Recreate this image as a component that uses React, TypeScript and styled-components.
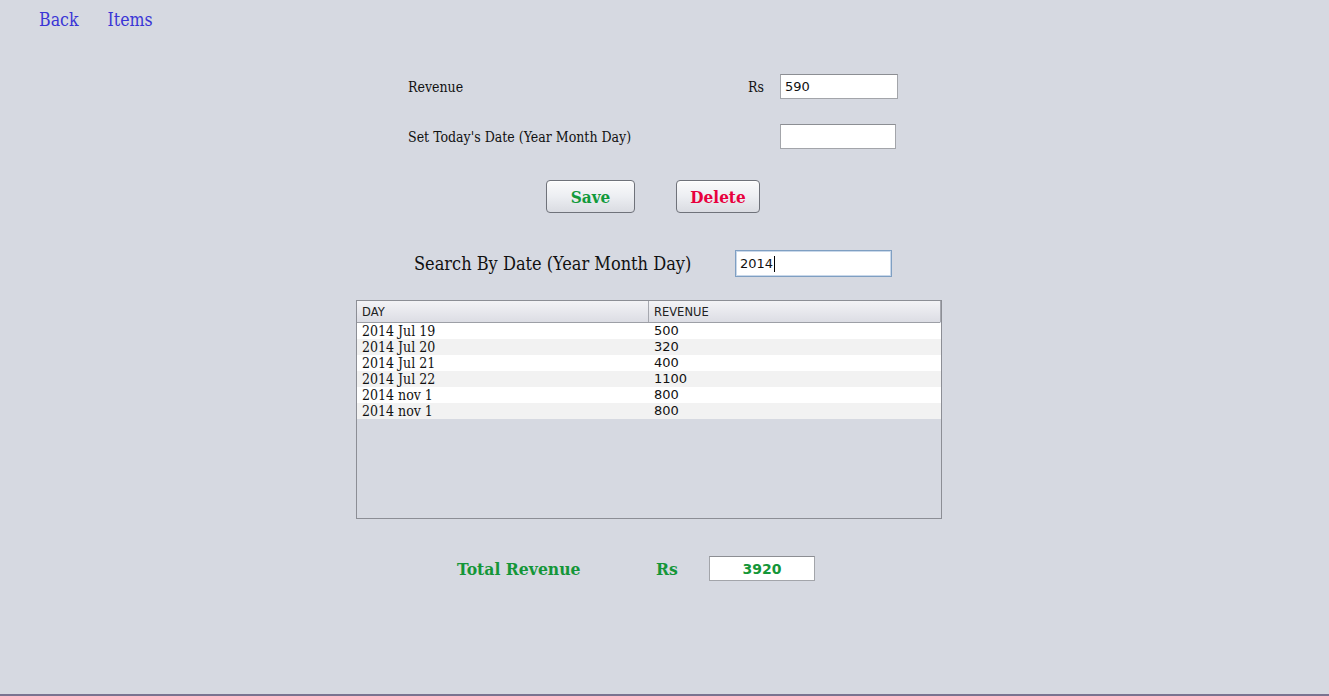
import React from "react";
import styled, { createGlobalStyle } from "styled-components";

const GlobalStyle = createGlobalStyle`
  html, body { margin: 0; padding: 0; background: #d6d9e1; }
  * { box-sizing: border-box; }
`;

const SLAB = `"DejaVu Serif Condensed", "Liberation Serif", serif`;
const SANS = `"DejaVu Sans", "Liberation Sans", sans-serif`;

const Page = styled.div`
  width: 1329px;
  height: 696px;
  background: #d6d9e1;
  border-bottom: 2px solid #7a7390;
  font-family: ${SLAB};
  color: #111;
  overflow: hidden;
`;

const Nav = styled.nav`
  display: flex;
  gap: 29px;
  padding: 9px 0 0 39px;
  height: 74px;
`;

const NavLink = styled.a`
  font-family: ${SLAB};
  font-size: 17.6px;
  color: #3a35d6;
  text-decoration: none;
  line-height: 22px;
  cursor: pointer;
`;

const Content = styled.main`
  margin-left: 356px;
  width: 586px;
  display: flex;
  flex-direction: column;
`;

const FormRow = styled.div<{ $mt?: number; $pl: number; $h?: number }>`
  display: flex;
  align-items: center;
  height: ${(p) => p.$h ?? 25}px;
  margin-top: ${(p) => p.$mt ?? 0}px;
  padding-left: ${(p) => p.$pl}px;
`;

const Label = styled.span<{ $w: number; $size?: number; $bold?: boolean; $color?: string }>`
  width: ${(p) => p.$w}px;
  flex: none;
  font-size: ${(p) => p.$size ?? 14}px;
  font-weight: ${(p) => (p.$bold ? 700 : 400)};
  color: ${(p) => p.$color ?? "#111"};
  white-space: nowrap;
`;

const TextInput = styled.div<{ $w: number; $focused?: boolean; $h?: number }>`
  width: ${(p) => p.$w}px;
  height: ${(p) => p.$h ?? 25}px;
  flex: none;
  background: #fff;
  border: 1px solid ${(p) => (p.$focused ? "#7f9fc2" : "#a3a5aa")};
  border-top-color: ${(p) => (p.$focused ? "#7f9fc2" : "#8c8e93")};
  box-shadow: ${(p) => (p.$focused ? "inset 0 0 0 1px #c9d8ea" : "none")};
  font-family: ${SANS};
  font-size: 13px;
  color: #111;
  display: flex;
  align-items: center;
  padding-left: 4px;
`;

const Caret = styled.span`
  display: inline-block;
  width: 1px;
  height: 16px;
  background: #000;
  margin-left: 1px;
`;

const ButtonRow = styled.div`
  display: flex;
  gap: 41px;
  padding-left: 190px;
  margin-top: 31px;
`;

const Button = styled.button<{ $w: number; $color: string }>`
  width: ${(p) => p.$w}px;
  height: 33px;
  border: 1px solid #6f727a;
  border-radius: 4px;
  background: linear-gradient(#fbfbfc 0%, #eceef2 50%, #dadce2 100%);
  box-shadow: inset 0 1px 0 #ffffff;
  font-family: ${SLAB};
  font-size: 17px;
  font-weight: 700;
  color: ${(p) => p.$color};
  padding: 0;
  cursor: pointer;
`;

const Table = styled.div`
  margin-top: 23px;
  width: 586px;
  height: 219px;
  border: 1px solid #8c8e95;
  display: flex;
  flex-direction: column;
  background: #d6d9e1;
`;

const HeaderRow = styled.div`
  display: grid;
  grid-template-columns: 292px 292px;
  height: 22px;
  background: linear-gradient(#f3f3f6, #dcdde4);
  border-bottom: 1px solid #9d9fa6;
  margin-right: 1px;
`;

const HeaderCell = styled.div`
  font-family: ${SANS};
  font-size: 11.5px;
  color: #222;
  padding-left: 5px;
  display: flex;
  align-items: center;
  border-right: 1px solid #a6a8af;
`;

const BodyRow = styled.div<{ $alt: boolean }>`
  display: grid;
  grid-template-columns: 292px 292px;
  height: 16px;
  background: ${(p) => (p.$alt ? "#f2f2f2" : "#ffffff")};
`;

const DayCell = styled.div`
  font-family: ${SLAB};
  font-size: 14px;
  line-height: 16px;
  padding-left: 5px;
  color: #111;
`;

const RevCell = styled.div`
  font-family: ${SANS};
  font-size: 13px;
  line-height: 16px;
  padding-left: 5px;
  color: #111;
`;

const TotalValue = styled(TextInput)`
  justify-content: center;
  padding-left: 0;
  font-family: ${SANS};
  font-weight: 700;
  font-size: 14px;
  color: #149638;
`;

const rows = [
  ["2014 Jul 19", "500"],
  ["2014 Jul 20", "320"],
  ["2014 Jul 21", "400"],
  ["2014 Jul 22", "1100"],
  ["2014 nov 1", "800"],
  ["2014 nov 1", "800"],
];

export default function App() {
  return (
    <Page>
      <GlobalStyle />
      <Nav>
        <NavLink>Back</NavLink>
        <NavLink>Items</NavLink>
      </Nav>
      <Content>
        <FormRow $pl={52}>
          <Label $w={340}>Revenue</Label>
          <Label $w={32}>Rs</Label>
          <TextInput $w={118}>590</TextInput>
        </FormRow>
        <FormRow $pl={52} $mt={25}>
          <Label $w={372}>Set Today's Date (Year Month Day)</Label>
          <TextInput $w={116} />
        </FormRow>
        <ButtonRow>
          <Button $w={89} $color="#119a3b">Save</Button>
          <Button $w={84} $color="#e8003d">Delete</Button>
        </ButtonRow>
        <FormRow $pl={58} $mt={37} $h={27}>
          <Label $w={321} $size={18}>Search By Date (Year Month Day)</Label>
          <TextInput $w={157} $h={27} $focused>
            2014<Caret />
          </TextInput>
        </FormRow>
        <Table>
          <HeaderRow>
            <HeaderCell>DAY</HeaderCell>
            <HeaderCell>REVENUE</HeaderCell>
          </HeaderRow>
          {rows.map(([d, r], i) => (
            <BodyRow key={i} $alt={i % 2 === 1}>
              <DayCell>{d}</DayCell>
              <RevCell>{r}</RevCell>
            </BodyRow>
          ))}
        </Table>
        <FormRow $pl={101} $mt={37}>
          <Label $w={199} $size={17.4} $bold $color="#149638">Total Revenue</Label>
          <Label $w={53} $size={17.4} $bold $color="#149638">Rs</Label>
          <TotalValue $w={106}>3920</TotalValue>
        </FormRow>
      </Content>
    </Page>
  );
}
